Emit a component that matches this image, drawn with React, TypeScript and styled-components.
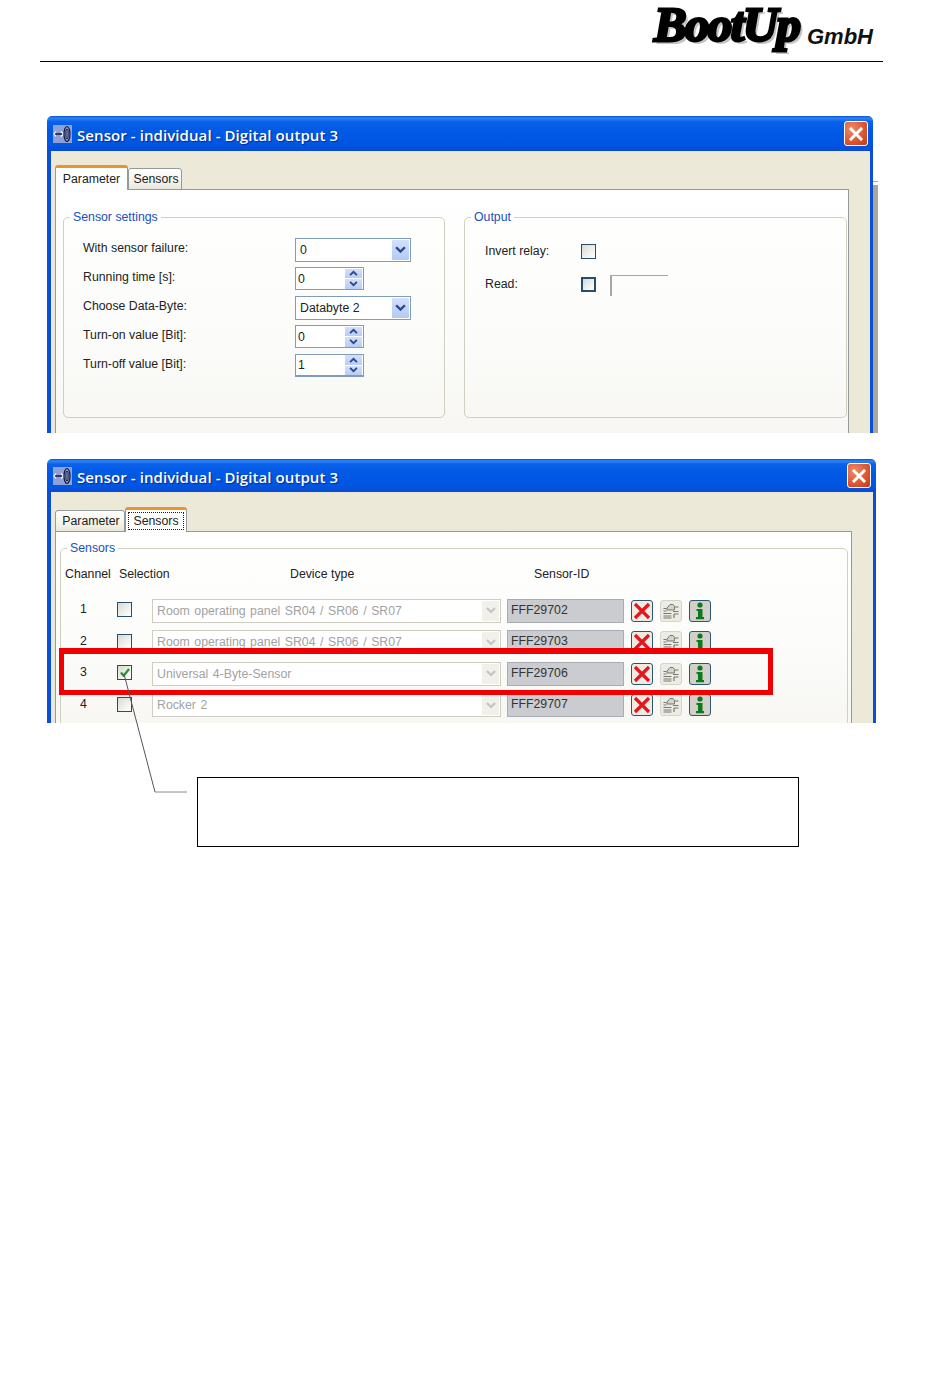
import React from "react";
import styled, { createGlobalStyle } from "styled-components";

const UI_FONT = `"Liberation Sans", Arial, sans-serif`;

const GlobalStyle = createGlobalStyle`
  html, body {
    margin: 0;
    padding: 0;
    background: #fff;
  }
  body {
    height: 1388px;
    overflow: hidden;
    font-family: ${UI_FONT};
    font-size: 12.3px;
    color: #222;
  }
`;

const Page = styled.div`
  width: 950px;
`;

const Header = styled.header`
  box-sizing: border-box;
  display: flex;
  justify-content: flex-end;
  align-items: flex-start;
  width: 843px;
  height: 62px;
  margin-left: 40px;
  padding-right: 10px;
  border-bottom: 1px solid #000;
`;

const Logo = styled.div`
  display: flex;
  align-items: flex-start;
`;

const LogoMark = styled.span`
  display: block;
  width: 150px;
  height: 52px;
  font-family: "Liberation Serif", serif;
  font-style: italic;
  font-weight: 700;
  font-size: 48px;
  line-height: 50px;
  letter-spacing: -1.6px;
  color: #000;
  -webkit-text-stroke: 2.8px #000;
  text-shadow: 3px 3px 0 #c4c4c4;
  white-space: nowrap;
  transform: translate(1px, 0) scaleX(1.02);
  transform-origin: left top;
`;

const LogoSuffix = styled.span`
  margin: 25px 0 0 4px;
  font-family: ${UI_FONT};
  font-style: italic;
  font-weight: 700;
  font-size: 22px;
  line-height: 24px;
  color: #111;
`;

const ParameterShot = styled.section`
  display: flex;
  width: 831px;
  height: 317px;
  margin: 54px 0 0 47px;
`;

const SideStrip = styled.div`
  box-sizing: border-box;
  width: 5px;
  margin-top: 65px;
  border-top: 1px solid #aca899;
  background: linear-gradient(#fff 0 3px, #aca899 3px);
`;

const SensorsShot = styled.section`
  position: relative;
  width: 829px;
  margin: 26px 0 0 47px;
`;

const Window = styled.div<{ $width: number; $height: number }>`
  display: flex;
  flex-direction: column;
  width: ${(p) => p.$width}px;
  height: ${(p) => p.$height}px;
  flex: none;
  overflow: hidden;
  border-radius: 5px 5px 0 0;
`;

const TitleBar = styled.div<{ $height: number }>`
  box-sizing: border-box;
  display: flex;
  align-items: center;
  flex: none;
  height: ${(p) => p.$height}px;
  padding: 0 5px 0 6px;
  background: linear-gradient(
    #0a4fd0 0,
    #2d86f5 6%,
    #0a62ea 16%,
    #0058e4 45%,
    #0056e2 80%,
    #0a4bd2 100%
  );
`;

const TitleText = styled.span`
  flex: 1;
  margin: 3px 0 0 5px;
  font-family: "Open Sans", sans-serif;
  font-weight: 600;
  font-size: 15px;
  letter-spacing: 0.08px;
  color: #fff;
  text-shadow: 1px 1px 1px #0a2c90;
  white-space: nowrap;
`;

const CloseButton = styled.div`
  box-sizing: border-box;
  display: flex;
  align-items: center;
  justify-content: center;
  width: 24px;
  height: 25px;
  border: 1px solid #fff;
  border-radius: 3px;
  background: radial-gradient(circle at 30% 30%, #ee8a68, #d9502a 65%, #c23a1a);
  svg {
    display: block;
  }
`;

const Client = styled.div<{ $top: number }>`
  flex: 1;
  min-height: 0;
  padding: ${(p) => p.$top}px 21px 0 4px;
  border-left: 4px solid #0a4fd8;
  border-right: 3px solid #0a4fd8;
  background: #ece9d8;
`;

const TabRow = styled.div`
  position: relative;
  z-index: 1;
  display: flex;
  align-items: flex-end;
  height: 25px;
  margin-bottom: -1px;
`;

const Tab = styled.div<{ $width: number; $active?: boolean }>`
  box-sizing: border-box;
  display: flex;
  align-items: center;
  justify-content: center;
  width: ${(p) => p.$width}px;
  height: ${(p) => (p.$active ? 25 : 22)}px;
  padding: ${(p) => (p.$active ? "0 0 1px 0" : "0 0 0 2px")};
  border: 1px solid #919b9c;
  border-bottom: ${(p) => (p.$active ? "none" : "1px solid #919b9c")};
  border-top: ${(p) => (p.$active ? "3px solid #e8952f" : "1px solid #919b9c")};
  border-radius: 3px 3px 0 0;
  background: ${(p) =>
    p.$active ? "#fff" : "linear-gradient(#fff, #f3f1e8 70%, #e9e7da)"};
`;

const FocusLabel = styled.span`
  padding: 1px 4px;
  outline: 1px dotted #222;
  outline-offset: 0;
`;

const Pane = styled.div`
  box-sizing: border-box;
  height: 100%;
  border: 1px solid #919b9c;
  border-bottom: none;
  background: linear-gradient(#fff, #fbfbf9 60%, #f6f5f1);
`;

const ParameterGroups = styled.div`
  display: flex;
  gap: 19px;
  padding: 20px 0 0 7px;
`;

const SensorGroupWrap = styled.div`
  padding: 9px 0 0 4px;
`;

const Group = styled.fieldset<{ $width: number; $height?: number }>`
  box-sizing: border-box;
  width: ${(p) => p.$width}px;
  height: ${(p) => (p.$height ? `${p.$height}px` : "auto")};
  margin: 0;
  padding: 0;
  border: 1px solid #d0d0bf;
  border-radius: 5px;
`;

const Legend = styled.legend`
  margin-left: 6px;
  padding: 0 3px;
  line-height: 14px;
  color: #1a4fc0;
`;

const SettingsGrid = styled.div`
  display: grid;
  grid-template-columns: 212px 1fr;
  grid-auto-rows: 29px;
  align-items: center;
  padding: 11px 0 0 19px;
`;

const FieldLabel = styled.span`
  padding-bottom: 4px;
`;

const OutputGrid = styled.div`
  display: grid;
  grid-template-columns: 96px 29px 1fr;
  grid-auto-rows: 33px;
  align-items: center;
  padding: 11px 0 0 20px;
`;

const OutputLabel = styled.span`
  padding-bottom: 2px;
`;

const ReadBox = styled.div`
  width: 56px;
  height: 20px;
  margin-top: 2px;
  border-top: 1px solid #a8a8a0;
  border-left: 2px solid #a8a8a0;
`;

const Combo = styled.div<{ $disabled?: boolean; $width: number }>`
  box-sizing: border-box;
  display: flex;
  align-items: center;
  justify-content: space-between;
  width: ${(p) => p.$width}px;
  height: 24px;
  padding: 1px 1px 1px 4px;
  border: 1px solid ${(p) => (p.$disabled ? "#cfcdbf" : "#7f9db9")};
  background: #fff;
  color: ${(p) => (p.$disabled ? "#a2a2a2" : "#222")};
  word-spacing: ${(p) => (p.$disabled ? 1.1 : 0)}px;
  white-space: nowrap;
`;

const ComboArrow = styled.div<{ $disabled?: boolean }>`
  display: flex;
  align-items: center;
  justify-content: center;
  flex: none;
  width: 17px;
  height: 20px;
  border-radius: 1px;
  background: ${(p) =>
    p.$disabled ? "#f1f0ea" : "linear-gradient(#d3e0fb, #b4c9f6)"};
  color: ${(p) => (p.$disabled ? "#c4c4c0" : "#2a4a8a")};
`;

const Spin = styled.div<{ $focused?: boolean }>`
  box-sizing: border-box;
  display: flex;
  align-items: center;
  justify-content: space-between;
  width: 69px;
  height: 23px;
  padding: 1px 1px 1px 2px;
  border: 1px solid #7f9db9;
  border-bottom-width: ${(p) => (p.$focused ? 2 : 1)}px;
  background: #fff;
`;

const SpinButtons = styled.div`
  display: flex;
  flex-direction: column;
  gap: 1px;
  flex: none;
  width: 17px;
`;

const SpinButton = styled.div`
  display: flex;
  align-items: center;
  justify-content: center;
  height: 9.5px;
  background: linear-gradient(#d3e0fb, #b8ccf6);
  color: #2a4a8a;
`;

const CheckBox = styled.div<{ $strong?: boolean; $raised?: boolean }>`
  box-sizing: border-box;
  display: flex;
  align-items: center;
  justify-content: center;
  width: 15px;
  height: 15px;
  margin-bottom: ${(p) => (p.$raised ? 2 : 0)}px;
  border: ${(p) => (p.$strong ? 2 : 1.5)}px solid #24506f;
  background: linear-gradient(135deg, #d9d9d4, #f7f7f4 75%, #fff);
`;

const SensorTable = styled.div`
  padding: 9px 0 0 4px;
`;

const HeaderRow = styled.div`
  display: grid;
  grid-template-columns: 54px 33px 355px 124px;
  height: 20px;
  line-height: 20px;
  margin-bottom: 11px;
  white-space: nowrap;
`;

const DeviceHeading = styled.span`
  padding-left: 138px;
`;

const SensorHeading = styled.span`
  padding-left: 27px;
`;

const SensorRow = styled.div`
  display: grid;
  grid-template-columns: 52px 35px 355px 124px 1fr;
  align-items: center;
  height: 31.5px;
`;

const ChannelNumber = styled.span`
  padding: 0 0 3px 15px;
`;

const SensorId = styled.div`
  box-sizing: border-box;
  width: 117px;
  height: 24px;
  padding-left: 3px;
  border: 1px solid #a9adb3;
  background: #cbcccf;
  color: #333;
  line-height: 21px;
`;

const RowActions = styled.div`
  display: flex;
  gap: 7px;
`;

const IconButton = styled.div<{ $muted?: boolean; $tint?: string }>`
  box-sizing: border-box;
  display: flex;
  align-items: center;
  justify-content: center;
  width: 22px;
  height: 22px;
  border: 1px solid ${(p) => (p.$muted ? "#d4d4cc" : "#2f5670")};
  border-radius: 3px;
  background: ${(p) => p.$tint ?? "#ecebe4"};
`;

const Highlight = styled.div`
  box-sizing: border-box;
  position: absolute;
  left: 12px;
  top: 189px;
  width: 714px;
  height: 47px;
  border: 5px solid #f00000;
  border-top-width: 6px;
`;

const Leader = styled.svg`
  position: absolute;
  left: 0;
  top: 0;
  overflow: visible;
  pointer-events: none;
`;

const Callout = styled.div`
  box-sizing: border-box;
  width: 602px;
  height: 70px;
  margin: 54px 0 0 150px;
  border: 1px solid #000;
`;

const WindowIcon = () => (
  <svg width="19" height="18" viewBox="0 0 19 18">
    <rect width="19" height="18" fill="#8f9fd8" />
    <path d="M1 9h10" stroke="#10183a" strokeWidth="1.4" />
    <path d="M3 6.5 1 9l2 2.5M8 6.5 10.5 9 8 11.5" stroke="#fff" strokeWidth="1.2" fill="none" />
    <ellipse cx="14" cy="9" rx="3" ry="7.5" fill="none" stroke="#10183a" strokeWidth="1.2" />
    <ellipse cx="14" cy="9" rx="1.2" ry="5" fill="none" stroke="#10183a" strokeWidth="1" />
  </svg>
);

const CloseGlyph = () => (
  <svg width="14" height="14" viewBox="0 0 14 14">
    <path d="M2 2 12 12M12 2 2 12" stroke="#fff" strokeWidth="3" strokeLinecap="square" />
  </svg>
);

const Chevron = ({ up, size = 9 }: { up?: boolean; size?: number }) => (
  <svg width={size} height={Math.round(size * 0.7)} viewBox="0 0 10 7">
    <path
      d={up ? "M1 6 5 2l4 4" : "M1 1l4 4 4-4"}
      stroke="currentColor"
      strokeWidth="2.2"
      fill="none"
    />
  </svg>
);

const Tick = () => (
  <svg width="10" height="9" viewBox="0 0 11 10">
    <path d="M1 5l3 3.500L10 1" stroke="#1f9a34" strokeWidth="2.6" fill="none" />
  </svg>
);

const RedCross = () => (
  <svg width="18" height="18" viewBox="0 0 18 18">
    <path d="M2 2 16 16M16 2 2 16" stroke="#e8141c" strokeWidth="3.2" />
  </svg>
);

const ChipIcon = () => (
  <svg width="18" height="18" viewBox="0 0 18 18" fill="none" stroke="#77776f" strokeWidth="1">
    <path d="M5 6 8 2.500h3l1.500 2V8H5z" fill="#d4d4ce" />
    <path d="M1.500 6.500h3M1.500 9h3M1.500 11.500h8M1.500 14h8M1.500 16h8" />
    <path d="M13 5h3.500M11 9.500h5.500M12 12h4.500M12 12v4" strokeWidth="1.2" />
  </svg>
);

const InfoIcon = () => (
  <svg width="14" height="18" viewBox="0 0 14 18">
    <circle cx="7" cy="3" r="2.600" fill="#0c7a1c" />
    <path d="M3.500 7h6v8H11v2.200H3v-2.200h2V9H3.500z" fill="#0c7a1c" />
  </svg>
);

const SpinControl = ({ value, focused }: { value: string; focused?: boolean }) => (
  <Spin $focused={focused}>
    <span>{value}</span>
    <SpinButtons>
      <SpinButton>
        <Chevron up size={9} />
      </SpinButton>
      <SpinButton>
        <Chevron size={9} />
      </SpinButton>
    </SpinButtons>
  </Spin>
);

const ComboControl = ({
  value,
  width,
  disabled,
}: {
  value: string;
  width: number;
  disabled?: boolean;
}) => (
  <Combo $width={width} $disabled={disabled}>
    <span>{value}</span>
    <ComboArrow $disabled={disabled}>
      <Chevron size={disabled ? 10 : 11} />
    </ComboArrow>
  </Combo>
);

const sensors = [
  { channel: "1", type: "Room operating panel SR04 / SR06 / SR07", id: "FFF29702" },
  { channel: "2", type: "Room operating panel SR04 / SR06 / SR07", id: "FFF29703" },
  { channel: "3", type: "Universal 4-Byte-Sensor", id: "FFF29706", checked: true },
  { channel: "4", type: "Rocker 2", id: "FFF29707" },
];

export default function App() {
  return (
    <Page>
      <GlobalStyle />
      <Header>
        <Logo>
          <LogoMark>BootUp</LogoMark>
          <LogoSuffix>GmbH</LogoSuffix>
        </Logo>
      </Header>

      <ParameterShot>
        <Window $width={826} $height={317}>
          <TitleBar $height={35}>
            <WindowIcon />
            <TitleText>Sensor - individual - Digital output 3</TitleText>
            <CloseButton>
              <CloseGlyph />
            </CloseButton>
          </TitleBar>
          <Client $top={14}>
            <TabRow>
              <Tab $width={73} $active>
                Parameter
              </Tab>
              <Tab $width={54}>Sensors</Tab>
            </TabRow>
            <Pane>
              <ParameterGroups>
                <Group $width={382} $height={208}>
                  <Legend>Sensor settings</Legend>
                  <SettingsGrid>
                    <FieldLabel>With sensor failure:</FieldLabel>
                    <ComboControl value="0" width={116} />
                    <FieldLabel>Running time [s]:</FieldLabel>
                    <SpinControl value="0" />
                    <FieldLabel>Choose Data-Byte:</FieldLabel>
                    <ComboControl value="Databyte 2" width={116} />
                    <FieldLabel>Turn-on value [Bit]:</FieldLabel>
                    <SpinControl value="0" />
                    <FieldLabel>Turn-off value [Bit]:</FieldLabel>
                    <SpinControl value="1" focused />
                  </SettingsGrid>
                </Group>
                <Group $width={383} $height={208}>
                  <Legend>Output</Legend>
                  <OutputGrid>
                    <OutputLabel>Invert relay:</OutputLabel>
                    <CheckBox />
                    <span />
                    <OutputLabel>Read:</OutputLabel>
                    <CheckBox $strong />
                    <ReadBox />
                  </OutputGrid>
                </Group>
              </ParameterGroups>
            </Pane>
          </Client>
        </Window>
        <SideStrip />
      </ParameterShot>

      <SensorsShot>
        <Window $width={829} $height={264}>
          <TitleBar $height={33}>
            <WindowIcon />
            <TitleText>Sensor - individual - Digital output 3</TitleText>
            <CloseButton>
              <CloseGlyph />
            </CloseButton>
          </TitleBar>
          <Client $top={15}>
            <TabRow>
              <Tab $width={70}>Parameter</Tab>
              <Tab $width={62} $active>
                <FocusLabel>Sensors</FocusLabel>
              </Tab>
            </TabRow>
            <Pane>
              <SensorGroupWrap>
                <Group $width={788} $height={260}>
                  <Legend>Sensors</Legend>
                  <SensorTable>
                    <HeaderRow>
                      <span>Channel</span>
                      <span>Selection</span>
                      <DeviceHeading>Device type</DeviceHeading>
                      <SensorHeading>Sensor-ID</SensorHeading>
                    </HeaderRow>
                    {sensors.map((s) => (
                      <SensorRow key={s.channel}>
                        <ChannelNumber>{s.channel}</ChannelNumber>
                        <CheckBox $raised>{s.checked && <Tick />}</CheckBox>
                        <ComboControl value={s.type} width={349} disabled />
                        <SensorId>{s.id}</SensorId>
                        <RowActions>
                          <IconButton>
                            <RedCross />
                          </IconButton>
                          <IconButton $muted>
                            <ChipIcon />
                          </IconButton>
                          <IconButton $tint="#d2d0c8">
                            <InfoIcon />
                          </IconButton>
                        </RowActions>
                      </SensorRow>
                    ))}
                  </SensorTable>
                </Group>
              </SensorGroupWrap>
            </Pane>
          </Client>
        </Window>
        <Highlight />
        <Leader width="160" height="340">
          <path d="M77 215 108 333" stroke="#555" strokeWidth="1" fill="none" />
          <path d="M108 333H140" stroke="#8a8a8a" strokeWidth="1" fill="none" />
        </Leader>
        <Callout />
      </SensorsShot>
    </Page>
  );
}
